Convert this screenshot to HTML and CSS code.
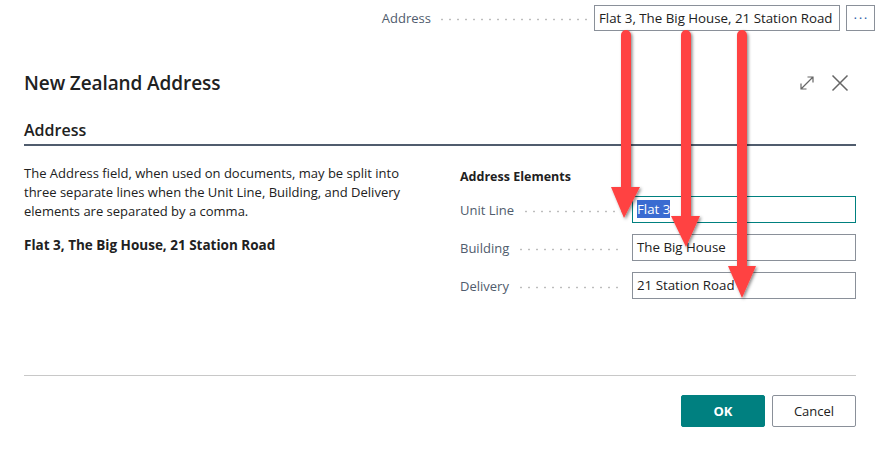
FILE: index.html
```html
<!DOCTYPE html>
<html>
<head>
<meta charset="utf-8">
<link rel="stylesheet" href="styles.css">
</head>
<body>
<div class="topbar">
  <span class="top-label">Address</span>
  <span class="leader top-leader"></span>
  <div class="top-input">Flat 3, The Big House, 21 Station Road</div>
  <button class="more-btn"><span class="dots">···</span></button>
</div>
<div class="dialog">
  <div class="dlg-header">
    <h1 class="dlg-title">New Zealand Address</h1>
    <div class="dlg-icons">
      <svg class="icon" width="16" height="16" viewBox="0 0 16 16"><path d="M2 14 L14 2 M8.5 2 H14 V7.5 M2 8.5 V14 H7.5" fill="none" stroke="#666" stroke-width="1.2"/></svg>
      <svg class="icon close" width="18" height="18" viewBox="0 0 18 18"><path d="M1.5 1.5 L16.5 16.5 M16.5 1.5 L1.5 16.5" fill="none" stroke="#666" stroke-width="1.5"/></svg>
    </div>
  </div>
  <h2 class="section-title">Address</h2>
  <div class="content">
    <div class="left-col">
      <p class="desc">The Address field, when used on documents, may be split into three separate lines when the Unit Line, Building, and Delivery elements are separated by a comma.</p>
      <p class="preview">Flat 3, The Big House, 21 Station Road</p>
    </div>
    <div class="right-col">
      <div class="group-title">Address Elements</div>
      <div class="field">
        <span class="label">Unit Line</span><span class="leader"></span>
        <div class="input focused"><span class="sel">Flat 3</span></div>
      </div>
      <div class="field">
        <span class="label">Building</span><span class="leader"></span>
        <div class="input">The Big House</div>
      </div>
      <div class="field">
        <span class="label">Delivery</span><span class="leader"></span>
        <div class="input">21 Station Road</div>
      </div>
    </div>
  </div>
  <div class="footer">
    <button class="btn primary">OK</button>
    <button class="btn">Cancel</button>
  </div>
</div>
<svg class="arrows" width="880" height="451" viewBox="0 0 880 451">
  <defs>
    <filter id="sh" x="-50%" y="-10%" width="200%" height="120%">
      <feDropShadow dx="1.5" dy="1.5" stdDeviation="1.5" flood-color="#000" flood-opacity="0.45"/>
    </filter>
  </defs>
  <g fill="#ff4242" filter="url(#sh)">
    <path d="M621 35 a5 5 0 0 1 10 0 V187 H640 L624 218 L611 187 H621 Z"/>
    <path d="M681 35 a5 5 0 0 1 10 0 V216 H700 L686 247 L671 216 H681 Z"/>
    <path d="M737 35 a5 5 0 0 1 10 0 V266 H756 L742 298 L728 266 H737 Z"/>
  </g>
</svg>
</body>
</html>
```
FILE: styles.css
```css
* { box-sizing: border-box; }
html, body { margin: 0; padding: 0; background: #fff; }
body {
  width: 880px;
  height: 451px;
  overflow: hidden;
  position: relative;
  font-family: "Open Sans", "Noto Sans", sans-serif;
  font-size: 13px;
  color: #212121;
}
.topbar {
  height: 36px;
  display: flex;
  align-items: center;
  justify-content: flex-end;
  padding-right: 5px;
}
.top-label {
  color: #505c6d;
  font-size: 13px;
  margin-right: 7px;
}
.leader {
  display: block;
  flex: 1;
  height: 3px;
  background-image: radial-gradient(circle, #bdbdbd 0.8px, transparent 1.2px);
  background-size: 8px 3px;
  background-repeat: repeat-x;
  margin-top: 3px;
}
.top-leader {
  flex: 0 0 150px;
  margin-right: 6px;
}
.top-input {
  height: 26px;
  width: 246px;
  border: 1px solid #8a9099;
  padding: 0 4px;
  line-height: 24px;
  font-size: 13.3px;
  white-space: nowrap;
  overflow: hidden;
  color: #212121;
}
.more-btn {
  margin-left: 6px;
  width: 29px;
  height: 26px;
  border: 1px solid #8a9099;
  background: #fff;
  padding: 0;
  display: flex;
  align-items: center;
  justify-content: center;
}
.dots {
  color: #2f5fa8;
  font-size: 13px;
  letter-spacing: 1px;
  padding-left: 1px;
  line-height: 1;
  font-family: "DejaVu Sans", sans-serif;
}
.dialog {
  padding: 0 24px;
}
.dlg-header {
  margin-top: 26px;
  height: 42px;
  display: flex;
  align-items: center;
  justify-content: space-between;
}
.dlg-title {
  margin: 0;
  font-size: 19px;
  font-weight: 600;
  color: #212121;
  letter-spacing: -0.1px;
}
.dlg-icons {
  display: flex;
  align-items: center;
  gap: 16px;
  padding-right: 7px;
}
.section-title {
  margin: 14px 0 0;
  font-size: 16px;
  font-weight: 600;
  line-height: 24px;
  padding-bottom: 2px;
  border-bottom: 2px solid #505c6d;
  color: #212121;
}
.content {
  display: flex;
  height: 230px;
  border-bottom: 1px solid #c8c8c8;
}
.left-col {
  width: 436px;
  padding-top: 18px;
}
.desc {
  margin: 0;
  width: 392px;
  line-height: 19px;
  font-size: 13px;
}
.preview {
  margin: 15px 0 0;
  font-weight: 700;
  font-size: 13.5px;
  line-height: 19px;
}
.right-col {
  flex: 1;
  padding-top: 21px;
}
.group-title {
  font-weight: 700;
  font-size: 12.5px;
  line-height: 19px;
  margin-bottom: 10px;
}
.field {
  display: flex;
  align-items: center;
  height: 27px;
  margin-bottom: 11px;
}
.label {
  color: #505c6d;
  font-size: 13px;
  margin-right: 8px;
}
.field .leader {
  margin-right: 10px;
}
.input {
  flex: 0 0 224px;
  height: 27px;
  border: 1px solid #8a9099;
  padding: 0 4px;
  line-height: 25px;
  font-size: 13.3px;
  color: #212121;
}
.input.focused {
  border-color: #00807f;
}
.sel {
  background: #3a6bd1;
  color: #fff;
}
.footer {
  display: flex;
  justify-content: flex-end;
  gap: 7px;
  padding-top: 19px;
}
.btn {
  width: 84px;
  height: 32px;
  border: 1px solid #8a9099;
  background: #fff;
  border-radius: 2px;
  font-family: inherit;
  font-size: 13px;
  color: #212121;
}
.btn.primary {
  background: #008080;
  border-color: #008080;
  color: #fff;
  font-weight: 700;
}
.arrows {
  position: absolute;
  left: 0;
  top: 0;
  pointer-events: none;
}
```
